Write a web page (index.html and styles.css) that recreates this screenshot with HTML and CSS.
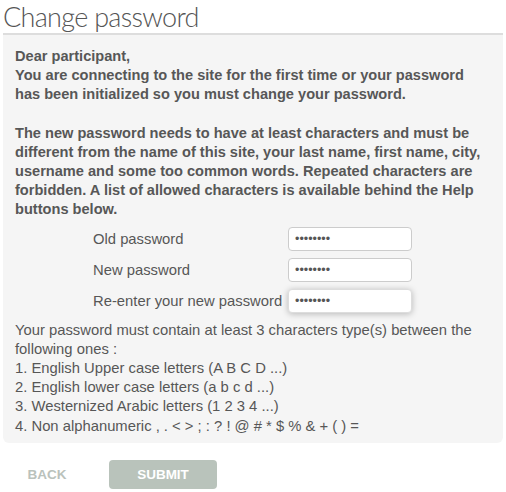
FILE: index.html
```html
<!DOCTYPE html>
<html>
<head>
<meta charset="utf-8">
<link rel="stylesheet" href="styles.css">
</head>
<body>
<div class="page">
  <h1 class="title">Change password</h1>
  <div class="panel">
    <p class="intro">Dear participant,<br>You are connecting to the site for the first time or your password has been initialized so you must change your password.</p>
    <p class="intro gap">The new password needs to have at least characters and must be different from the name of this site, your last name, first name, city, username and some too common words. Repeated characters are forbidden. A list of allowed characters is available behind the Help buttons below.</p>
    <div class="form">
      <label class="label" for="old">Old password</label>
      <input class="field" id="old" type="password" value="password">
      <label class="label" for="new">New password</label>
      <input class="field" id="new" type="password" value="password">
      <label class="label" for="again">Re-enter your new password</label>
      <input class="field focused" id="again" type="password" value="password">
    </div>
    <p class="rules">Your password must contain at least 3 characters type(s) between the following ones :<br>1. English Upper case letters (A B C D ...)<br>2. English lower case letters (a b c d ...)<br>3. Westernized Arabic letters (1 2 3 4 ...)<br>4. Non alphanumeric , . &lt; &gt; ; : ? ! @ # * $ % &amp; + ( ) =</p>
  </div>
  <div class="actions">
    <button class="btn back" type="button">BACK</button>
    <button class="btn submit" type="button">SUBMIT</button>
  </div>
</div>
</body>
</html>
```

FILE: styles.css
```css
html, body {
  margin: 0;
  padding: 0;
  background: #ffffff;
}
.page {
  padding: 0 3px;
  width: 500px;
  font-family: "Liberation Sans", Arial, sans-serif;
  color: #575757;
}
.title {
  margin: 0;
  height: 33px;
  font-family: Lato, Roboto, "Liberation Sans", sans-serif;
  font-weight: 300;
  font-size: 27px;
  line-height: 33px;
  color: #555555;
  letter-spacing: -0.7px;
}
.panel {
  border-top: 2px solid #dddddd;
  background: #f5f5f5;
  border-radius: 0 0 6px 6px;
  padding: 12px 12px 7px 12px;
}
.intro {
  margin: 0;
  font-weight: bold;
  font-size: 14.6px;
  line-height: 19.2px;
}
.intro.gap {
  margin-top: 19px;
}
.form {
  display: grid;
  grid-template-columns: 195px 124px;
  row-gap: 7px;
  margin: 7px 0 0 78px;
  align-items: center;
}
.label {
  font-size: 14.8px;
  line-height: 24px;
  color: #575757;
}
.field {
  box-sizing: border-box;
  width: 124px;
  height: 24px;
  margin: 0;
  padding: 0 6px;
  border: 1px solid #cccccc;
  border-radius: 4px;
  background: #ffffff;
  font-family: "Liberation Sans", Arial, sans-serif;
  font-size: 12.5px;
  color: #555555;
  outline: none;
}
.field.focused {
  border-color: #dddddd;
  box-shadow: 0 1px 6px rgba(0, 0, 0, 0.25);
}
.rules {
  margin: 8px 0 0 0;
  font-size: 14.8px;
  line-height: 19.2px;
}
.actions {
  display: flex;
  align-items: center;
  margin-top: 17px;
  padding-left: 16px;
}
.btn {
  height: 29px;
  border: none;
  border-radius: 4px;
  font-family: "Liberation Sans", Arial, sans-serif;
  font-weight: bold;
  font-size: 13.5px;
  padding: 0;
  cursor: pointer;
}
.back {
  background: transparent;
  color: #bac2bc;
  width: 56px;
  margin-right: 34px;
}
.submit {
  background: #b9c3bb;
  color: #ffffff;
  width: 108px;
}
```
